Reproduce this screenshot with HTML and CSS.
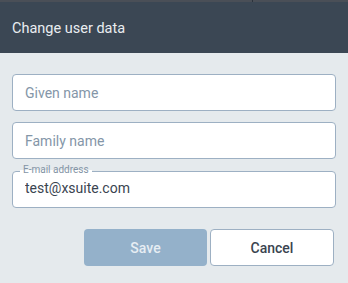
FILE: index.html
```html
<!doctype html>
<html>
<head>
    <meta charset="utf-8">
    <title>Change user data</title>
    <link rel="stylesheet" href="styles.css">
</head>
<body>
    <div class="dialog">
        <div class="topline"><span class="sep"></span></div>
        <div class="head">Change user data</div>
        <div class="form">
            <div class="field">
                <input type="text" placeholder="Given name" value="">
            </div>
            <div class="field">
                <input type="text" placeholder="Family name" value="">
            </div>
            <div class="field filled">
                <span class="label">E-mail address</span>
                <input type="text" value="test@xsuite.com">
            </div>
            <div class="buttons">
                <button class="save">Save</button>
                <button class="cancel">Cancel</button>
            </div>
        </div>
    </div>
</body>
</html>
```

FILE: styles.css
```css
*{margin:0; padding:0; box-sizing:border-box;}
body{
    width:348px;
    height:283px;
    background:#e5eaed;
    font-family:Roboto, "Liberation Sans", sans-serif;
    overflow:hidden;
}
.topline{
    height:2px;
    background:#4a4f57;
    position:relative;
}
.topline .sep{
    position:absolute;
    left:252px;
    top:0;
    width:1px;
    height:2px;
    background:#2c333c;
}
.head{
    height:51px;
    background:#3b4754;
    color:#e9edf0;
    font-size:14.5px;
    padding:17px 0 0 12px;
    line-height:20px;
}
.form{
    padding:21px 12px 0 12px;
}
.field{
    position:relative;
    margin-bottom:11px;
}
.field input{
    display:block;
    width:324px;
    height:37px;
    border:1px solid #9db0c3;
    border-radius:4px;
    background:#fff;
    padding:0 12px;
    font-family:Roboto, "Liberation Sans", sans-serif;
    font-size:14px;
    color:#3a4450;
    outline:none;
}
.field input::placeholder{
    color:#8496a8;
}
.field.filled{
    margin-top:12px;
    margin-bottom:0;
}
.field.filled input{
    padding-top:2px;
    padding-bottom:6px;
}
.field .label{
    position:absolute;
    left:8px;
    top:-7px;
    padding:0 3px;
    background:linear-gradient(#e5eaed 50%, #fff 50%);
    font-size:10px;
    line-height:12px;
    color:#8394a5;
}
.buttons{
    display:flex;
    justify-content:flex-end;
    gap:3px;
    padding:21px 2px 0 0;
}
.buttons button{
    height:37px;
    border-radius:4px;
    font-family:Roboto, "Liberation Sans", sans-serif;
    font-size:14px;
    font-weight:500;
}
.save{
    width:123px;
    background:#94b1ca;
    border:none;
    color:#e6edf3;
}
.cancel{
    width:124px;
    background:#fff;
    border:1px solid #9db0c3;
    color:#3a4450;
}
```
